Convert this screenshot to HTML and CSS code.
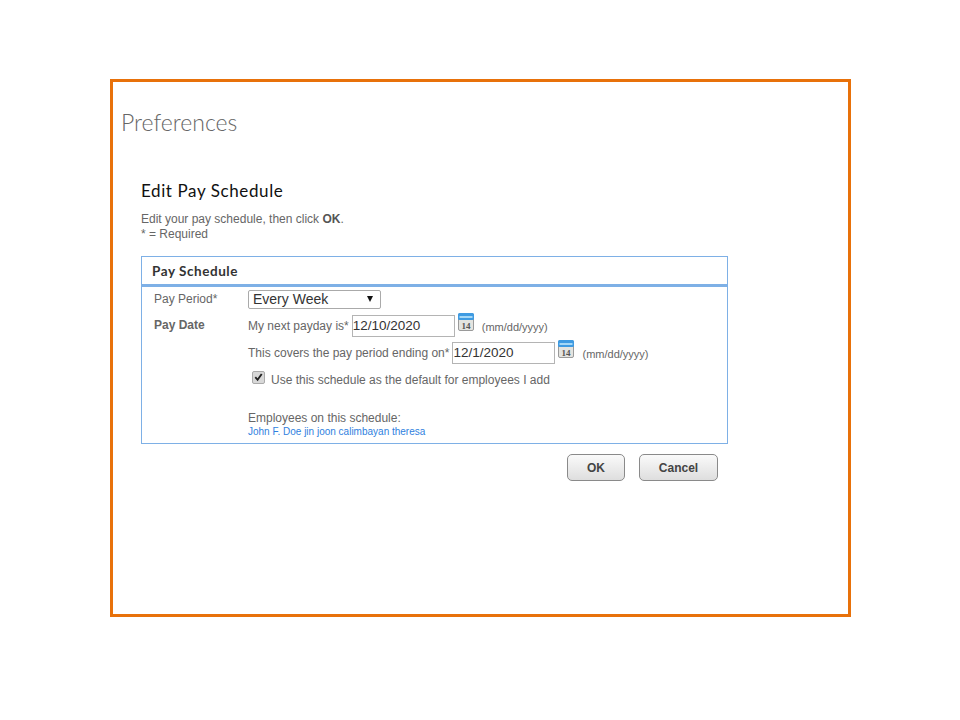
FILE: index.html
```html
<!DOCTYPE html>
<html lang="en">

<head>
    <meta charset="UTF-8">
    <meta name="viewport" content="width=device-width, initial-scale=1.0">
    <title>Preferences</title>
    <link rel="stylesheet" href="styles.css">
</head>

<body>
    <div class="frame">
        <h1>Preferences</h1>

        <div class="content">
            <h2>Edit Pay Schedule</h2>
            <p class="intro">Edit your pay schedule, then click <b>OK</b>.<br>* = Required</p>

            <div class="panel">
                <div class="panel-title">Pay Schedule</div>
                <div class="panel-body">
                    <div class="row-period">
                        <div class="label">Pay Period*</div>
                        <div class="select"><span>Every Week</span><span class="arrow"></span></div>
                    </div>
                    <div class="row-date">
                        <div class="label label-bold">Pay Date</div>
                        <div class="fields">
                            <div class="date-line">
                                <span>My next payday is*</span>
                                <span class="date-input">12/10/2020</span>
                                <svg class="cal" viewBox="0 0 16 18" width="16" height="18">
                                    <rect x="0.5" y="0.5" width="15" height="17" rx="1.5" fill="#e4e4e0" stroke="#9a9a9a" />
                                    <rect x="0" y="0" width="16" height="7" rx="1.5" fill="#3f9be2" />
                                    <rect x="1.5" y="3" width="13" height="2" fill="#a5d8f7" />
                                    <text x="8" y="15.5" class="cal-num">14</text>
                                </svg>
                                <span class="hint">(mm/dd/yyyy)</span>
                            </div>
                            <div class="date-line">
                                <span>This covers the pay period ending on*</span>
                                <span class="date-input">12/1/2020</span>
                                <svg class="cal" viewBox="0 0 16 18" width="16" height="18">
                                    <rect x="0.5" y="0.5" width="15" height="17" rx="1.5" fill="#e4e4e0" stroke="#9a9a9a" />
                                    <rect x="0" y="0" width="16" height="7" rx="1.5" fill="#3f9be2" />
                                    <rect x="1.5" y="3" width="13" height="2" fill="#a5d8f7" />
                                    <text x="8" y="15.5" class="cal-num">14</text>
                                </svg>
                                <span class="hint">(mm/dd/yyyy)</span>
                            </div>
                            <div class="default-line">
                                <span class="check">
                                    <svg viewBox="0 0 12 12" width="12" height="12">
                                        <path d="M2.5 6.2 L5 9 L9.5 2.8" fill="none" stroke="#222" stroke-width="2" />
                                    </svg>
                                </span>
                                <span>Use this schedule as the default for employees I add</span>
                            </div>
                            <div class="employees">
                                <div>Employees on this schedule:</div>
                                <a class="names">John F. Doe jin joon calimbayan theresa</a>
                            </div>
                        </div>
                    </div>
                </div>
            </div>

            <div class="actions">
                <button class="btn btn-ok">OK</button>
                <button class="btn btn-cancel">Cancel</button>
            </div>
        </div>
    </div>
</body>

</html>
```

FILE: styles.css
```css
body {
    margin: 0;
    background: white;
    font-family: 'Liberation Sans', Arial, sans-serif;
    font-size: 12px;
    color: #666;
}

.frame {
    box-sizing: border-box;
    width: 741px;
    height: 538px;
    margin: 79px 0 0 110px;
    padding: 26px 8px 0 8px;
    border: 3px solid #e8710a;
}

h1 {
    margin: 0;
    font-family: 'Lato', sans-serif;
    font-size: 23px;
    font-weight: 300;
    line-height: 28px;
    color: #666;
}

.content {
    width: 587px;
    margin: 45px 0 0 20px;
}

h2 {
    margin: 0;
    font-family: 'Lato', sans-serif;
    font-size: 17px;
    font-weight: 400;
    line-height: 20px;
    letter-spacing: 0.6px;
    color: #111;
}

.intro {
    margin: 11px 0 0 0;
    line-height: 15px;
}

.intro b {
    color: #555;
}

.panel {
    margin-top: 14px;
    height: 188px;
    box-sizing: border-box;
    border: 1px solid #7eb0e6;
}

.panel-title {
    height: 27px;
    padding-left: 10px;
    border-bottom: 3px solid #7eb0e6;
    font-family: 'Lato', sans-serif;
    font-size: 13.5px;
    font-weight: 700;
    line-height: 28px;
    letter-spacing: 0.55px;
    color: #333;
}

.panel-body {
    padding: 3px 0 0 12px;
}

.row-period,
.row-date {
    display: flex;
}

.label {
    width: 94px;
    flex: none;
    line-height: 19px;
}

.label-bold {
    font-weight: bold;
    line-height: 20px;
}

.select {
    box-sizing: border-box;
    display: flex;
    justify-content: space-between;
    align-items: center;
    width: 133px;
    height: 19px;
    padding: 0 7px 1px 4px;
    border: 1px solid #aaa;
    border-radius: 2px;
    font-size: 14px;
    color: #333;
}

.arrow {
    width: 0;
    height: 0;
    border-left: 3.5px solid transparent;
    border-right: 3.5px solid transparent;
    border-top: 6px solid #111;
}

.row-date {
    margin-top: 6px;
}

.date-line {
    display: flex;
    align-items: center;
    height: 22px;
    margin-bottom: 5px;
}

.date-input {
    box-sizing: border-box;
    width: 103px;
    height: 22px;
    margin-left: 3px;
    padding-left: 0;
    border: 1px solid #b4b4b4;
    font-size: 13.5px;
    line-height: 20px;
    color: #333;
}

.cal {
    margin: -8px 0 0 3px;
}

.cal-num {
    font-family: 'Liberation Serif', serif;
    font-size: 9px;
    font-weight: bold;
    text-anchor: middle;
    fill: #555;
}

.hint {
    margin: 2px 0 0 8px;
    font-size: 11px;
}

.default-line {
    display: flex;
    align-items: center;
    height: 17px;
    margin-top: 7px;
    padding-left: 4px;
}

.check {
    box-sizing: border-box;
    display: flex;
    align-items: center;
    justify-content: center;
    width: 13px;
    height: 13px;
    margin: -5px 6px 0 0;
    border: 1px solid #aaa;
    border-radius: 2px;
    background: #d8d8d8;
}

.employees {
    margin-top: 23px;
    line-height: 14px;
}

.names {
    display: block;
    font-size: 10px;
    line-height: 14px;
    color: #2f7fe0;
}

.actions {
    display: flex;
    justify-content: flex-end;
    gap: 14px;
    margin-top: 10px;
    padding-right: 10px;
}

.btn {
    box-sizing: border-box;
    height: 27px;
    padding: 0;
    border: 1px solid #8a8a8a;
    border-radius: 5px;
    background: linear-gradient(#fafafa, #dedede);
    font-family: 'Liberation Sans', Arial, sans-serif;
    font-size: 12px;
    font-weight: bold;
    color: #444;
}

.btn-ok {
    width: 58px;
}

.btn-cancel {
    width: 79px;
}
```
